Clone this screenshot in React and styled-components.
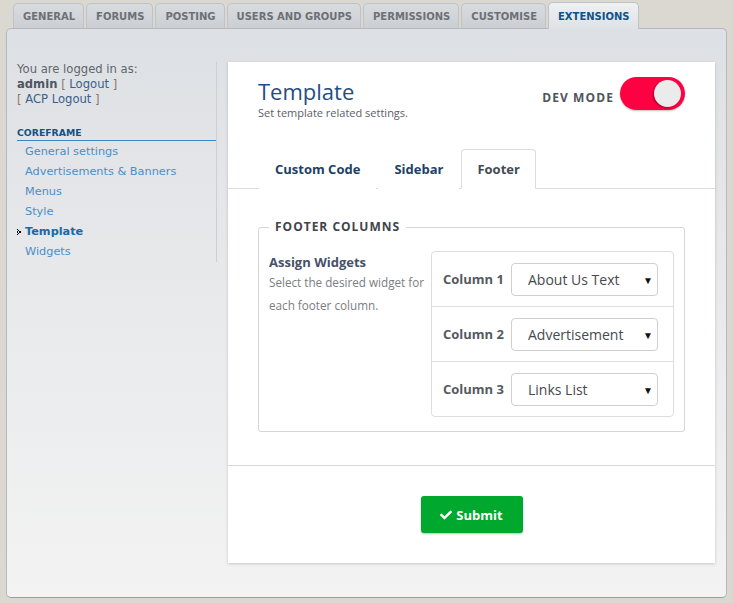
import React from "react";
import styled, { createGlobalStyle } from "styled-components";
import { FaCheck } from "react-icons/fa";

const GlobalStyle = createGlobalStyle`
    html, body {
        margin: 0;
        padding: 0;
    }
    body {
        background: #dbd8d1;
        font-family: "DejaVu Sans", Verdana, sans-serif;
        width: 733px;
        height: 603px;
        overflow: hidden;
    }
`

const TabStrip = styled.ul`
    list-style: none;
    display: flex;
    align-items: flex-end;
    gap: 2px;
    margin: 0;
    padding: 3px 0 0 13px;
    height: 25px;
`

const TopTab = styled.li`
    position: relative;
    z-index: ${p => (p.$active ? 2 : 1)};
    box-sizing: border-box;
    height: ${p => (p.$active ? "27px" : "25px")};
    line-height: 25px;
    padding: ${p => (p.$active ? "1px" : "0")} 8px 0 9px;
    margin-bottom: ${p => (p.$active ? "-1px" : "0")};
    border: 1px solid #bfc2c6;
    border-bottom: none;
    border-radius: 5px 5px 0 0;
    background: ${p => (p.$active
        ? "linear-gradient(to bottom, #eef0f2, #dfe2e5)"
        : "linear-gradient(to bottom, #d9dcdf, #cbced2)")};
    color: ${p => (p.$active ? "#105289" : "#6b7076")};
    font-size: 10px;
    font-weight: bold;
    text-transform: uppercase;
`

const Panel = styled.div`
    box-sizing: border-box;
    margin: 0 6px;
    height: 570px;
    border: 1px solid #b6b9bc;
    border-bottom-color: #9c9c9c;
    border-radius: 5px;
    background: linear-gradient(to bottom, #dde0e4 0%, #e9eaec 50%, #f3f3f3 100%);
    display: flex;
    align-items: flex-start;
    padding: 33px 11px 0 10px;
`

const Sidebar = styled.div`
    width: 199px;
    border-right: 1px solid #cdd0d3;
    margin-right: 11px;
    font-size: 11.6px;
    color: #5f666e;
`

const Line = styled.div`
    line-height: 15px;
`

const Bold = styled.b`
    color: #4e5663;
`

const Bracket = styled.span`
    color: #8c7866;
    a {
        color: #3a5f8a;
        text-decoration: none;
    }
`

const MenuHeading = styled.div`
    margin-top: 19px;
    padding-bottom: 1px;
    border-bottom: 1px solid #3b87c4;
    color: #105289;
    font-weight: bold;
    font-size: 9.3px;
    line-height: 13px;
    text-transform: uppercase;
`

const Menu = styled.ul`
    list-style: none;
    margin: 1px 0 0;
    padding: 0;
`

const MenuItem = styled.li`
    position: relative;
    line-height: 20px;
    padding-left: 8px;
    font-size: 11.3px;
    font-weight: ${p => (p.$active ? "bold" : "normal")};
    color: ${p => (p.$active ? "#1a68a8" : "#4a8fc9")};
`

const Bullet = styled.svg`
    position: absolute;
    left: 0;
    top: 7px;
`

const Card = styled.div`
    width: 487px;
    background: #fff;
    box-shadow: 0 1px 3px rgba(0, 0, 0, 0.18);
    font-family: "Open Sans", sans-serif;
`

const CardHeader = styled.div`
    display: flex;
    justify-content: space-between;
    align-items: flex-start;
    padding: 14px 30px 0;
`

const Title = styled.h1`
    margin: 0;
    font-size: 22px;
    font-weight: normal;
    line-height: 30px;
    color: #1f4d86;
`

const Subtitle = styled.div`
    font-size: 11px;
    line-height: 14px;
    color: #5b6068;
`

const DevMode = styled.div`
    display: flex;
    align-items: center;
    gap: 6px;
    margin-top: 1px;
`

const DevLabel = styled.span`
    font-size: 12px;
    font-weight: bold;
    letter-spacing: 1.1px;
    color: #4f545c;
    margin-top: 7px;
`

const Toggle = styled.div`
    position: relative;
    width: 65px;
    height: 33px;
    border-radius: 17px;
    background: #ff0043;
    box-shadow: 0 1px 2px rgba(0, 0, 0, 0.25);
`

const Knob = styled.div`
    position: absolute;
    right: 4px;
    top: 3px;
    width: 27px;
    height: 27px;
    border-radius: 50%;
    background: #ebebeb;
    box-shadow: -1px 1px 2px rgba(0, 0, 0, 0.35);
`

const SubTabs = styled.ul`
    list-style: none;
    display: flex;
    gap: 2px;
    margin: 29px 0 0;
    padding: 0 30px 0 31px;
    border-bottom: 1px solid #dcdcdc;
`

const SubTab = styled.li`
    height: 38px;
    line-height: 38px;
    padding: 0 15px;
    margin-bottom: -1px;
    font-size: 13px;
    font-weight: bold;
    color: ${p => (p.$active ? "#444a52" : "#223f66")};
    border: 1px solid ${p => (p.$active ? "#dcdcdc" : "transparent")};
    border-bottom-color: ${p => (p.$active ? "#fff" : "transparent")};
    border-radius: 4px 4px 0 0;
    background: #fff;
`

const Body = styled.div`
    padding: 30px 30px 33px;
`

const Fieldset = styled.fieldset`
    margin: 0;
    padding: 0 10px 14px;
    border: 1px solid #d6d6d6;
    border-radius: 3px;
`

const Legend = styled.legend`
    padding: 0 6px;
    font-size: 12px;
    line-height: 16px;
    font-weight: bold;
    letter-spacing: 1px;
    color: #3f434a;
    text-transform: uppercase;
`

const FieldGrid = styled.div`
    display: grid;
    grid-template-columns: 162px 1fr;
    margin-top: 16px;
`

const FieldInfo = styled.div`
    padding-top: 2px;
`

const FieldTitle = styled.div`
    font-size: 13px;
    font-weight: bold;
    line-height: 18px;
    color: #46506a;
`

const FieldDesc = styled.div`
    font-size: 11.7px;
    line-height: 23px;
    color: #7a7d82;
`

const ColumnTable = styled.div`
    border: 1px solid #dedede;
    border-radius: 4px;
`

const ColumnRow = styled.div`
    display: flex;
    align-items: center;
    justify-content: space-between;
    height: 54px;
    padding: 0 15px 0 11px;
    & + & {
        border-top: 1px solid #dedede;
    }
`

const ColumnLabel = styled.span`
    font-size: 13px;
    font-weight: bold;
    color: #555a60;
`

const SelectWrap = styled.div`
    position: relative;
    width: 147px;
`

const Select = styled.select`
    appearance: none;
    width: 100%;
    height: 33px;
    padding: 0 0 0 16px;
    border: 1px solid #cfcfcf;
    border-radius: 4px;
    background: #fff;
    font-family: "Open Sans", sans-serif;
    font-size: 14px;
    color: #46494e;
`

const Arrow = styled.span`
    position: absolute;
    right: 5px;
    top: 10px;
    font-size: 10px;
    color: #111;
    pointer-events: none;
`

const CardFooter = styled.div`
    display: flex;
    justify-content: center;
    padding: 30px 0;
    border-top: 1px solid #d8d8d8;
`

const SubmitButton = styled.button`
    display: flex;
    align-items: center;
    justify-content: center;
    gap: 4px;
    width: 102px;
    height: 37px;
    border: none;
    border-radius: 3px;
    background: #00a82d;
    color: #fff;
    font-family: "Open Sans", sans-serif;
    font-size: 13px;
    font-weight: bold;
    box-shadow: 0 1px 2px rgba(0, 0, 0, 0.25);
    svg {
        font-size: 12px;
    }
`

const mainTabs = ["General", "Forums", "Posting", "Users and groups", "Permissions", "Customise", "Extensions"];
const menu = ["General settings", "Advertisements & Banners", "Menus", "Style", "Template", "Widgets"];
const columns = [
    { label: "Column 1", value: "About Us Text" },
    { label: "Column 2", value: "Advertisement" },
    { label: "Column 3", value: "Links List" },
];

const App = () => {
    return (
        <>
            <GlobalStyle />
            <TabStrip>
                {mainTabs.map(tab => (
                    <TopTab key={tab} $active={tab === "Extensions"}>{tab}</TopTab>
                ))}
            </TabStrip>
            <Panel>
                <Sidebar>
                    <Line>You are logged in as:</Line>
                    <Line><Bold>admin</Bold> <Bracket>[ <a href="#">Logout</a> ]</Bracket></Line>
                    <Line><Bracket>[ <a href="#">ACP Logout</a> ]</Bracket></Line>
                    <MenuHeading>Coreframe</MenuHeading>
                    <Menu>
                        {menu.map(item => (
                            <MenuItem key={item} $active={item === "Template"}>
                                {item === "Template" && (
                                    <Bullet width="4" height="6" viewBox="0 0 4 6">
                                        <rect x="0" y="0" width="1" height="1" fill="#000" />
                                        <rect x="1" y="1" width="1" height="1" fill="#000" />
                                        <rect x="2" y="2" width="2" height="2" fill="#000" />
                                        <rect x="1" y="4" width="1" height="1" fill="#000" />
                                        <rect x="0" y="5" width="1" height="1" fill="#000" />
                                        <rect x="0" y="2" width="1" height="2" fill="#000" />
                                    </Bullet>
                                )}
                                {item}
                            </MenuItem>
                        ))}
                    </Menu>
                </Sidebar>
                <Card>
                    <CardHeader>
                        <div>
                            <Title>Template</Title>
                            <Subtitle>Set template related settings.</Subtitle>
                        </div>
                        <DevMode>
                            <DevLabel>DEV MODE</DevLabel>
                            <Toggle><Knob /></Toggle>
                        </DevMode>
                    </CardHeader>
                    <SubTabs>
                        <SubTab>Custom Code</SubTab>
                        <SubTab>Sidebar</SubTab>
                        <SubTab $active>Footer</SubTab>
                    </SubTabs>
                    <Body>
                        <Fieldset>
                            <Legend>Footer Columns</Legend>
                            <FieldGrid>
                                <FieldInfo>
                                    <FieldTitle>Assign Widgets</FieldTitle>
                                    <FieldDesc>Select the desired widget for each footer column.</FieldDesc>
                                </FieldInfo>
                                <ColumnTable>
                                    {columns.map(col => (
                                        <ColumnRow key={col.label}>
                                            <ColumnLabel>{col.label}</ColumnLabel>
                                            <SelectWrap>
                                                <Select defaultValue={col.value}>
                                                    <option>{col.value}</option>
                                                </Select>
                                                <Arrow>▼</Arrow>
                                            </SelectWrap>
                                        </ColumnRow>
                                    ))}
                                </ColumnTable>
                            </FieldGrid>
                        </Fieldset>
                    </Body>
                    <CardFooter>
                        <SubmitButton><FaCheck /> Submit</SubmitButton>
                    </CardFooter>
                </Card>
            </Panel>
        </>
    );
};

export default App;
